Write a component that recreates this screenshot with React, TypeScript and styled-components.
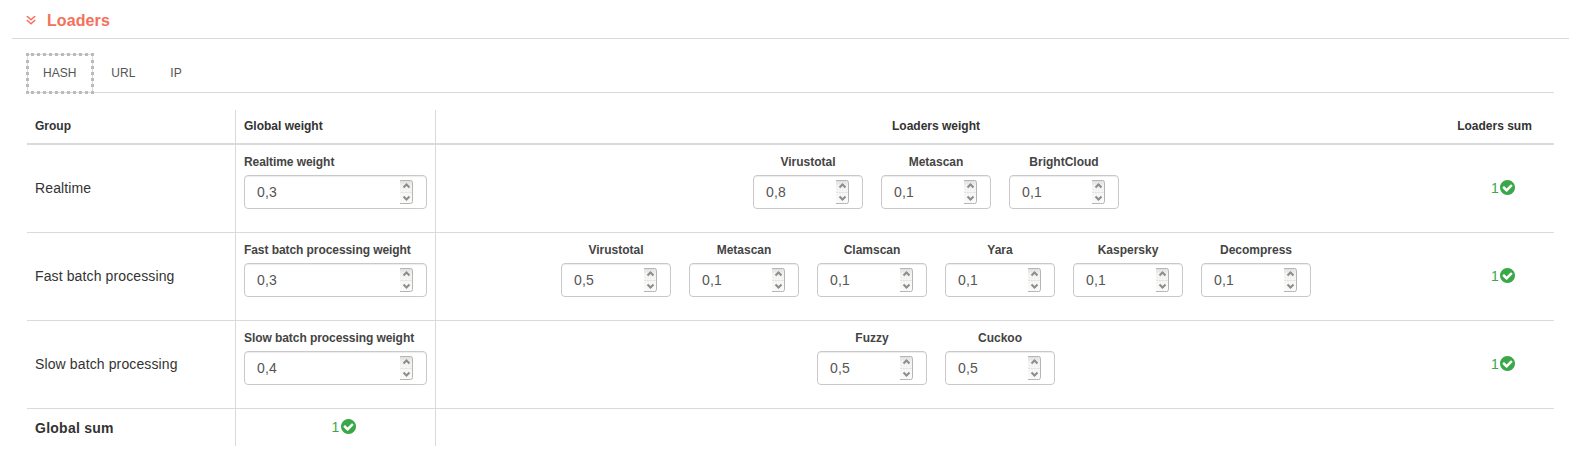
import React from "react";
import styled, { createGlobalStyle } from "styled-components";

const Global = createGlobalStyle`
  * { box-sizing: border-box; }
  body {
    margin: 0;
    background: #fff;
    color: #333;
    font-family: "Liberation Sans", Arial, sans-serif;
    font-size: 14px;
    line-height: 20px;
  }
`;

const Page = styled.main`
  padding: 0 11px 0 12px;
`;

const PanelHeader = styled.header`
  display: flex;
  align-items: center;
  height: 39px;
  padding: 3px 0 0 14px;
  border-bottom: 1px solid #dadada;
  color: #f4705a;
`;

const PanelTitle = styled.h2`
  margin: 0 0 0 11px;
  font-size: 16px;
  line-height: 20px;
  letter-spacing: 0.1px;
`;

const PanelBody = styled.section`
  padding: 15px 15px 0;
`;

const TabBar = styled.nav`
  display: flex;
  height: 39px;
  border-bottom: 1px solid #dadada;
`;

const Tab = styled.a<{ $active?: boolean }>`
  display: flex;
  align-items: center;
  height: 39px;
  padding: ${(p) => (p.$active ? "0 16px 2px 15px" : "0 17px 2px")};
  margin-right: 1px;
  border: ${(p) => (p.$active ? "1px solid #dadada" : "0")};
  outline: ${(p) => (p.$active ? "3px dotted #bbb" : "0")};
  outline-offset: -2px;
  color: #555;
  font-size: 12px;
`;

const Table = styled.table`
  width: 1527px;
  margin-top: 17px;
  table-layout: fixed;
  border-collapse: separate;
  border-spacing: 0;
`;

const Col = styled.col<{ $w: number }>`
  width: ${(p) => p.$w}px;
`;

const HeadCell = styled.th<{ $center?: boolean; $ruled?: boolean }>`
  height: 35px;
  padding: 0 8px 2px;
  border-bottom: 2px solid #dadada;
  border-left: ${(p) => (p.$ruled ? "1px solid #dadada" : "0")};
  font-size: 12px;
  text-align: ${(p) => (p.$center ? "center" : "left")};

  &:last-child {
    padding-right: 9px;
  }
`;

const Cell = styled.td<{ $ruled?: boolean; $last?: boolean; $strong?: boolean }>`
  height: ${(p) => (p.$last ? 37 : 88)}px;
  padding: 0 8px ${(p) => (p.$strong ? 0 : 2)}px;
  border-bottom: ${(p) => (p.$last ? "0" : "1px solid #dadada")};
  border-left: ${(p) => (p.$ruled ? "1px solid #dadada" : "0")};
  font-weight: ${(p) => (p.$strong ? "bold" : "normal")};
  letter-spacing: ${(p) => (p.$strong ? 0.25 : 0.12)}px;
`;

const FieldRow = styled.div`
  display: flex;
  justify-content: center;
  gap: 18px;
  height: 70px;
`;

const FieldBox = styled.label<{ $wide?: boolean }>`
  display: flex;
  flex-direction: column;
  width: ${(p) => (p.$wide ? 183 : 110)}px;
  text-align: ${(p) => (p.$wide ? "left" : "center")};
`;

const FieldName = styled.span<{ $wide?: boolean }>`
  height: 22px;
  color: #444;
  font-size: 12px;
  font-weight: bold;
  line-height: 18px;
  letter-spacing: ${(p) => (p.$wide ? -0.07 : 0)}px;
`;

const NumberBox = styled.span`
  display: flex;
  align-items: center;
  justify-content: space-between;
  height: 34px;
  padding: 0 13px 0 12px;
  border: 1px solid #c9c9c9;
  border-radius: 4px;
  box-shadow: inset 0 1px 1px rgba(0, 0, 0, 0.075);
  color: #555;
`;

const Sum = styled.div<{ $tight?: boolean }>`
  display: flex;
  align-items: center;
  justify-content: center;
  gap: ${(p) => (p.$tight ? 1 : 2)}px;
  padding-left: ${(p) => (p.$tight ? 16 : 17)}px;
  color: #39a849;
`;

const Chevrons = () => (
  <svg width="10" height="10" viewBox="0 0 10 10" fill="none" stroke="currentColor" strokeWidth="1.5">
    <path d="M.8 0L5 3.8 9.2 0M.8 4L5 7.8 9.2 4" />
  </svg>
);

const Check = () => (
  <svg width="15" height="15" viewBox="128 128 1536 1536" fill="currentColor">
    <path d="M1412 734q0-28-18-46l-91-90q-19-19-45-19t-45 19l-408 407-226-226q-19-19-45-19t-45 19l-91 90q-18 18-18 46 0 27 18 45l362 362q19 19 45 19 27 0 46-19l543-543q18-18 18-45zm252 162q0 209-103 385.5t-279.5 279.5-385.5 103-385.5-103-279.5-279.5-103-385.5 103-385.5 279.5-279.5 385.5-103 385.5 103 279.5 279.5 103 385.5z" />
  </svg>
);

const Stepper = () => (
  <svg width="13" height="24" viewBox="0 0 13 24" fill="none">
    <defs>
      <linearGradient id="stepper" x1="0" y1="0" x2="0" y2="1">
        <stop offset="0" stopColor="#dedede" />
        <stop offset=".25" stopColor="#f3f3f3" />
        <stop offset="1" stopColor="#fafafa" />
      </linearGradient>
    </defs>
    <path d="M0 .5h10.5a2 2 0 0 1 2 2v19a2 2 0 0 1-2 2H0" fill="url(#stepper)" stroke="#b5b5b2" />
    <path d="M0 12.5h12" stroke="#e6e6e6" />
    <path d="M3.5 7.5l3-3 3 3M3.5 16.5l3 3 3-3" stroke="#8d8d88" strokeWidth="2" />
  </svg>
);

const Field = ({ name, value, wide }: { name: string; value: string; wide?: boolean }) => (
  <FieldBox $wide={wide}>
    <FieldName $wide={wide}>{name}</FieldName>
    <NumberBox>
      {value}
      <Stepper />
    </NumberBox>
  </FieldBox>
);

const Total = ({ value, tight }: { value: number; tight?: boolean }) => (
  <Sum $tight={tight}>
    {value}
    <Check />
  </Sum>
);

const groups = [
  {
    name: "Realtime",
    weight: "0,3",
    loaders: [["Virustotal", "0,8"], ["Metascan", "0,1"], ["BrightCloud", "0,1"]],
  },
  {
    name: "Fast batch processing",
    weight: "0,3",
    loaders: [
      ["Virustotal", "0,5"],
      ["Metascan", "0,1"],
      ["Clamscan", "0,1"],
      ["Yara", "0,1"],
      ["Kaspersky", "0,1"],
      ["Decompress", "0,1"],
    ],
  },
  {
    name: "Slow batch processing",
    weight: "0,4",
    loaders: [["Fuzzy", "0,5"], ["Cuckoo", "0,5"]],
  },
];

export default function App() {
  return (
    <Page>
      <Global />
      <PanelHeader>
        <Chevrons />
        <PanelTitle>Loaders</PanelTitle>
      </PanelHeader>
      <PanelBody>
        <TabBar>
          <Tab $active>HASH</Tab>
          <Tab>URL</Tab>
          <Tab>IP</Tab>
        </TabBar>
        <Table>
          <colgroup>
            <Col $w={208} />
            <Col $w={200} />
            <Col $w={1001} />
            <Col $w={118} />
          </colgroup>
          <thead>
            <tr>
              <HeadCell>Group</HeadCell>
              <HeadCell $ruled>Global weight</HeadCell>
              <HeadCell $ruled $center>Loaders weight</HeadCell>
              <HeadCell $center>Loaders sum</HeadCell>
            </tr>
          </thead>
          <tbody>
            {groups.map((group) => (
              <tr key={group.name}>
                <Cell>{group.name}</Cell>
                <Cell $ruled>
                  <FieldRow>
                    <Field wide name={`${group.name} weight`} value={group.weight} />
                  </FieldRow>
                </Cell>
                <Cell $ruled>
                  <FieldRow>
                    {group.loaders.map(([name, value]) => (
                      <Field key={name} name={name} value={value} />
                    ))}
                  </FieldRow>
                </Cell>
                <Cell><Total tight value={1} /></Cell>
              </tr>
            ))}
            <tr>
              <Cell $last $strong>Global sum</Cell>
              <Cell $last $ruled><Total value={1} /></Cell>
              <Cell $last $ruled />
              <Cell $last />
            </tr>
          </tbody>
        </Table>
      </PanelBody>
    </Page>
  );
}
